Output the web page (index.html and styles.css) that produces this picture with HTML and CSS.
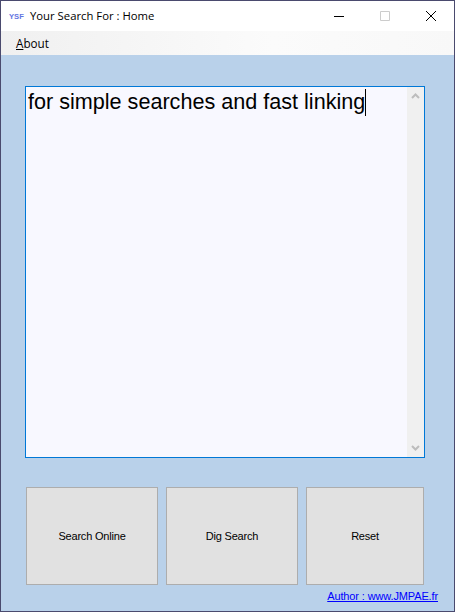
FILE: index.html
```html
<!DOCTYPE html>
<html lang="en">
  <head>
    <meta charset="UTF-8" />
    <title>Your Search For : Home</title>
    <link rel="stylesheet" href="styles.css">
  </head>
  <body>
    <div class="window">
      <header class="titlebar">
        <span class="logo">YSF</span>
        <span class="title">Your Search For : Home</span>
        <div class="controls">
          <span class="control">
            <svg width="12" height="12" viewBox="0 0 12 12"><path d="M1 6.5h10" stroke="#000" fill="none"/></svg>
          </span>
          <span class="control">
            <svg width="12" height="12" viewBox="0 0 12 12"><path d="M1.5 1.5h9v9h-9z" stroke="#ccc" fill="none"/></svg>
          </span>
          <span class="control">
            <svg width="12" height="12" viewBox="0 0 12 12"><path d="M1 1l10 10M11 1L1 11" stroke="#000" fill="none"/></svg>
          </span>
        </div>
      </header>
      <nav class="menubar">
        <span class="menuitem"><u>A</u>bout</span>
      </nav>
      <main class="content">
        <div class="textbox">
          <div class="typed"><span class="caret">for simple searches and fast linking</span></div>
          <div class="scrollbar">
            <svg width="9" height="6" viewBox="0 0 9 6"><path d="M1 5l3.5-3.5L8 5" stroke="#bdbdbd" stroke-width="2" fill="none"/></svg>
            <svg width="9" height="6" viewBox="0 0 9 6"><path d="M1 1l3.5 3.5L8 1" stroke="#bdbdbd" stroke-width="2" fill="none"/></svg>
          </div>
        </div>
        <div class="buttons">
          <button class="btn wide">Search Online</button>
          <button class="btn wide">Dig Search</button>
          <button class="btn narrow">Reset</button>
        </div>
        <div class="footer">
          <a class="author" href="#">Author : www.JMPAE.fr</a>
        </div>
      </main>
    </div>
  </body>
</html>
```

FILE: styles.css
```css
html, body {
  margin: 0;
  height: 100%;
}

.window {
  box-sizing: border-box;
  width: 455px;
  height: 612px;
  display: flex;
  flex-direction: column;
  border: 1px solid #4a4a6e;
  background-color: #b9d1ea;
}

.titlebar {
  height: 30px;
  flex: none;
  display: flex;
  align-items: center;
  background-color: #fff;
  font-family: "Open Sans", sans-serif;
  font-size: 11.3px;
  color: #000;
}
.logo {
  width: 29px;
  padding-left: 8px;
  box-sizing: border-box;
  font-family: "Liberation Sans", sans-serif;
  font-size: 7.6px;
  font-weight: bold;
  color: #6375e2;
}
.title {
  flex: 1;
  padding-bottom: 1px;
}
.controls {
  display: flex;
}
.control {
  width: 46px;
  height: 30px;
  display: flex;
  align-items: center;
  justify-content: center;
}

.menubar {
  height: 24px;
  flex: none;
  display: flex;
  align-items: center;
  background: linear-gradient(to right, #f0f0f0, #fbfbfb 60%, #f8f8f8);
  font-family: "Open Sans", sans-serif;
  font-size: 11.7px;
  color: #000;
}
.menuitem {
  padding-left: 15px;
}

.content {
  flex: 1;
  display: flex;
  flex-direction: column;
  padding: 31px 0 0 24px;
}

.textbox {
  box-sizing: border-box;
  width: 400px;
  height: 372px;
  flex: none;
  display: flex;
  border: 1px solid #0078d7;
  background-color: #f8f8ff;
}
.typed {
  flex: 1;
  padding: 1px 0 0 2px;
  font-family: "Liberation Sans", sans-serif;
  font-size: 21.6px;
  line-height: 28px;
  color: #000;
}
.caret {
  border-right: 1px solid #000;
  padding-bottom: 2px;
}
.scrollbar {
  width: 17px;
  display: flex;
  flex-direction: column;
  justify-content: space-between;
  align-items: center;
  padding: 6px 0;
  box-sizing: border-box;
  background-color: #f0f0f0;
}

.buttons {
  display: flex;
  gap: 8px;
  margin: 29px 0 0 1px;
}
.btn {
  box-sizing: border-box;
  height: 98px;
  padding: 0 0 1px;
  border: 1px solid #adadad;
  background-color: #e1e1e1;
  font-family: "Liberation Sans", sans-serif;
  font-size: 11px;
  letter-spacing: -0.2px;
  color: #000;
}
.wide {
  width: 132px;
}
.narrow {
  width: 118px;
}

.footer {
  display: flex;
  justify-content: flex-end;
  padding: 4px 16px 0 0;
}
.author {
  font-family: "Liberation Sans", sans-serif;
  font-size: 11px;
  letter-spacing: -0.13px;
  line-height: 14px;
  color: #0000ff;
}
```
